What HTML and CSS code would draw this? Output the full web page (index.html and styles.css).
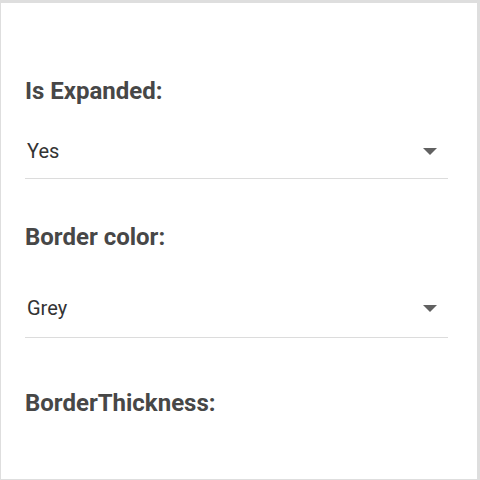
FILE: index.html
```html
<!DOCTYPE html>
<html>
<head>
<meta charset="utf-8">
<link rel="stylesheet" href="styles.css">
</head>
<body>
<div class="frame">
  <div class="field field-first">
    <div class="label">Is Expanded:</div>
    <div class="select select-1">
      <span class="value">Yes</span>
      <svg class="arrow" width="14" height="7" viewBox="0 0 14 7"><polygon points="0,0 14,0 7,7" fill="#616161"/></svg>
    </div>
  </div>
  <div class="field field-second">
    <div class="label">Border color:</div>
    <div class="select select-2">
      <span class="value">Grey</span>
      <svg class="arrow" width="14" height="7" viewBox="0 0 14 7"><polygon points="0,0 14,0 7,7" fill="#616161"/></svg>
    </div>
  </div>
  <div class="field field-third">
    <div class="label">BorderThickness:</div>
  </div>
</div>
</body>
</html>
```
FILE: styles.css
```css
html, body {
  margin: 0;
  padding: 0;
}
body {
  width: 480px;
  height: 480px;
  background: #ffffff;
  font-family: Roboto, "Liberation Sans", sans-serif;
  overflow: hidden;
}
.frame {
  box-sizing: border-box;
  width: 480px;
  height: 480px;
  border-top: 3px solid #dedede;
  border-left: 1px solid #dedede;
  border-right: 3px solid #dedede;
  border-bottom: 1px solid #dedede;
  padding: 74px 29px 0 24px;
  display: flex;
  flex-direction: column;
}
.label {
  font-size: 24px;
  line-height: 28px;
  font-weight: 700;
  color: #474747;
}
.select {
  display: flex;
  align-items: center;
  justify-content: space-between;
  border-bottom: 1px solid #dcdcdc;
  padding: 0 11px 0 2px;
}
.select-1 {
  margin-top: 34px;
  padding-bottom: 15px;
}
.select-2 {
  margin-top: 45px;
  padding-bottom: 17px;
}
.value {
  font-size: 20px;
  line-height: 24px;
  color: #333333;
}
.arrow {
  display: block;
}
.field-second {
  margin-top: 44px;
}
.field-third {
  margin-top: 51px;
}
```
